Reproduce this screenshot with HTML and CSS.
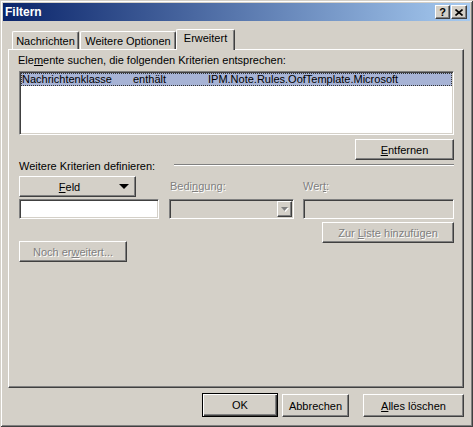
FILE: index.html
```html
<!DOCTYPE html>
<html lang="de">
<head>
<meta charset="utf-8">
<title>Filtern</title>
<link rel="stylesheet" href="styles.css">
</head>
<body>
<div class="win">
  <div class="titlebar">
    <span class="title">Filtern</span>
    <div class="tbtns">
      <span class="tbtn q">?</span>
      <span class="tbtn x"><svg width="8" height="7" viewBox="0 0 8 7"><path d="M0.5 0.5 L7.5 6.5 M7.5 0.5 L0.5 6.5" stroke="#000" stroke-width="1.6" fill="none"/></svg></span>
    </div>
  </div>
  <div class="content">
    <div class="tabs">
      <div class="tab t1">Nachrichten</div>
      <div class="tab t2">Weitere Optionen</div>
      <div class="tab sel">Erweitert</div>
    </div>
    <div class="panel">
      <div class="lbl first">Ele<u>m</u>ente suchen, die folgenden Kriterien entsprechen:</div>
      <div class="list">
        <div class="lrow"><span class="c1">Nachrichtenklasse</span><span class="c2">enthält</span><span class="c3">IPM.Note.Rules.OofTemplate.Microsoft</span></div>
      </div>
      <div class="endrow"><div class="btn entf"><span><u>E</u>ntfernen</span></div></div>
      <div class="sep"><span class="seplbl">Weitere Kriterien definieren:</span><span class="sepline"></span></div>
      <div class="crit">
        <div class="btn feld"><span class="feldtxt"><u>F</u>eld</span><svg class="darr" width="10" height="5" viewBox="0 0 10 5"><polygon points="0,0 10,0 5,5" fill="#000"/></svg></div>
        <div class="clbl dis">Bedi<u>n</u>gung:</div>
        <div class="clbl dis wl">Wer<u>t</u>:</div>
        <div class="edit white"></div>
        <div class="edit combo"><span class="cbtn"><svg width="7" height="4" viewBox="0 0 7 4"><polygon points="0,0 7,0 3.5,4" fill="#808080"/></svg></span></div>
        <div class="edit wert"></div>
      </div>
      <div class="endrow add"><div class="btn addbtn dis"><span>Zur <u>L</u>iste hinzufügen</span></div></div>
      <div class="btn noch dis"><span>Noch er<u>w</u>eitert...</span></div>
    </div>
    <div class="footer">
      <div class="btn ok"><span>OK</span></div>
      <div class="btn abbr"><span>Abbrechen</span></div>
      <div class="btn alles"><span><u>A</u>lles löschen</span></div>
    </div>
  </div>
</div>
</body>
</html>
```
FILE: styles.css
```css
* { box-sizing: border-box; }
html, body { margin: 0; padding: 0; }
body {
  width: 473px;
  height: 427px;
  overflow: hidden;
  background: #D4D0C8;
  font-family: "Liberation Sans", Arial, sans-serif;
  font-size: 11px;
  color: #000;
}
u { text-decoration: underline; text-underline-offset: 1px; }

.win {
  width: 473px;
  height: 427px;
  padding: 3px;
  background: #D4D0C8;
  box-shadow: inset 1px 1px 0 #D4D0C8, inset -1px -1px 0 #404040,
              inset 2px 2px 0 #fff, inset -2px -2px 0 #808080;
}

.titlebar {
  height: 18px;
  display: flex;
  align-items: center;
  justify-content: space-between;
  padding: 0 3px 0 2px;
  background: linear-gradient(to right, #0A246A, #A6CAF0);
}
.title { color: #fff; font-weight: bold; font-size: 12px; }
.tbtns { display: flex; gap: 1px; }
.tbtn {
  width: 16px;
  height: 14px;
  display: flex;
  align-items: center;
  justify-content: center;
  background: #D4D0C8;
  border: 1px solid;
  border-color: #fff #404040 #404040 #fff;
  box-shadow: inset -1px -1px 0 #808080;
  font-weight: bold;
  font-size: 11px;
  line-height: 12px;
}
.tbtn.q { width: 15px; }

.content { padding: 8px 6px 0 5px; }

.tabs {
  display: flex;
  align-items: flex-end;
  height: 20px;
  padding-left: 4px;
  position: relative;
  z-index: 1;
}
.tab {
  height: 18px;
  border: 1px solid;
  border-bottom: none;
  border-color: #fff #404040 #404040 #fff;
  box-shadow: inset -1px 0 0 #808080;
  border-radius: 2px 2px 0 0;
  text-align: center;
  padding-top: 1px;
  line-height: 16px;
  background: #D4D0C8;
}
.t1 { width: 67px; margin-right: 1px; }
.t2 { width: 96px; }
.sel {
  width: 59px;
  height: 21px;
  margin-bottom: -1px;
  padding-top: 0;
}

.panel {
  height: 339px;
  border: 1px solid;
  border-color: #fff #404040 #404040 #fff;
  box-shadow: inset -1px -1px 0 #808080;
  padding: 4px 9px 0 10px;
}
.lbl { line-height: 13px; }
.first { margin-left: -1px; }

.list {
  margin-top: 4px;
  height: 64px;
  background: #fff;
  border: 1px solid;
  border-color: #808080 #fff #fff #808080;
  box-shadow: inset 1px 1px 0 #404040, inset -1px -1px 0 #D4D0C8;
  padding: 1px;
}
.lrow {
  height: 13px;
  line-height: 13px;
  background: #A7B3D5;
  outline: 1px dotted #333;
  outline-offset: -1px;
  padding-left: 1px;
  white-space: nowrap;
}
.lrow span { display: inline-block; }
.c1 { width: 111px; }
.c2 { width: 75px; }

.btn {
  display: flex;
  align-items: center;
  justify-content: center;
  height: 21px;
  background: #D4D0C8;
  border: 1px solid;
  border-color: #fff #404040 #404040 #fff;
  box-shadow: inset -1px -1px 0 #808080;
  white-space: nowrap;
}
.endrow { display: flex; justify-content: flex-end; }
.entf { margin-top: 4px; width: 99px; }

.sep { display: flex; line-height: 13px; }
.sepline {
  flex: 1;
  height: 2px;
  margin-top: 4px;
  margin-left: 19px;
  border-top: 1px solid #808080;
  border-bottom: 1px solid #fff;
}

.crit {
  display: grid;
  grid-template-columns: 150px 134px 151px;
  grid-template-rows: 21px 20px;
  row-gap: 2px;
  margin-top: 3px;
}
.feld { width: 117px; justify-content: space-between; padding: 0 6px 0 0; }
.feldtxt { flex: 1; text-align: center; }
.darr { display: block; }
.clbl { align-self: center; line-height: 13px; padding-left: 1px; }
.clbl.wl { padding-left: 0; }
.dis { color: #808080; text-shadow: 1px 1px 0 #fff; }

.edit {
  height: 20px;
  border: 1px solid;
  border-color: #808080 #fff #fff #808080;
  box-shadow: inset 1px 1px 0 #404040, inset -1px -1px 0 #D4D0C8;
  background: #D4D0C8;
}
.edit.white { width: 140px; background: #fff; }
.edit.combo {
  width: 125px;
  display: flex;
  justify-content: flex-end;
  padding: 1px;
}
.edit.wert { width: 151px; }
.cbtn {
  width: 15px;
  height: 16px;
  display: flex;
  align-items: center;
  justify-content: center;
  border: 1px solid;
  border-color: #fff #404040 #404040 #fff;
  box-shadow: inset -1px -1px 0 #808080;
}
.cbtn svg { display: block; filter: drop-shadow(1px 1px 0 #fff); }

.add { margin-top: 3px; }
.addbtn { width: 132px; }
.noch { width: 108px; margin-top: -2px; }

.footer {
  display: flex;
  justify-content: flex-end;
  align-items: flex-start;
  margin-top: 5px;
}
.ok {
  width: 76px;
  height: 24px;
  border: 1px solid #000;
  box-shadow: inset 1px 1px 0 #fff, inset -1px -1px 0 #404040, inset -2px -2px 0 #808080;
  margin-right: 4px;
}
.abbr { width: 67px; height: 23px; margin-top: 1px; margin-right: 14px; }
.alles { width: 101px; height: 23px; margin-top: 1px; }
```
